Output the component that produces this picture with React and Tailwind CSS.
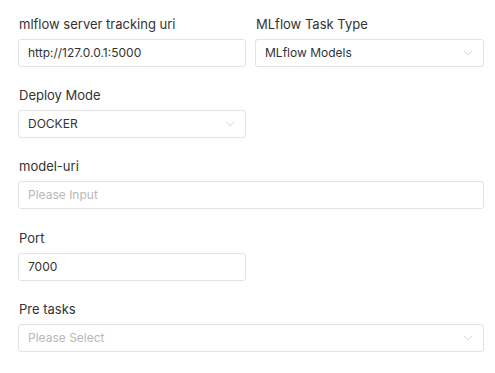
import { ChevronDown } from "lucide-react";

function Field({ label, children }) {
  return (
    <div className="flex flex-col">
      <label className="text-[13px] leading-[18px] text-[#333] mb-[6px] pl-[1px]">{label}</label>
      {children}
    </div>
  );
}

function TextBox({ value, placeholder }) {
  return (
    <div className="h-[28px] border border-[#e3e3e3] rounded-[3px] bg-white flex items-center px-[9px] text-[12px]">
      {value ? (
        <span className="text-[#333]">{value}</span>
      ) : (
        <span className="text-[#b8b8b8]">{placeholder}</span>
      )}
    </div>
  );
}

function SelectBox({ value, placeholder }) {
  return (
    <div className="h-[28px] border border-[#e3e3e3] rounded-[3px] bg-white flex items-center justify-between pl-[9px] pr-[8px] text-[12px]">
      {value ? (
        <span className="text-[#333]">{value}</span>
      ) : (
        <span className="text-[#b8b8b8]">{placeholder}</span>
      )}
      <ChevronDown size={14} strokeWidth={1.3} className="text-[#c4c4c4]" />
    </div>
  );
}

function App() {
  return (
    <div
      className="w-[495px] h-[373px] bg-white pl-[18px] pr-[11px] pt-[15px]"
      style={{ fontFamily: "Inter, 'Noto Sans', sans-serif" }}
    >
      <div className="grid grid-cols-[228px_229px] gap-x-[9px]">
        <Field label="mlflow server tracking uri">
          <TextBox value="http://127.0.0.1:5000" />
        </Field>
        <Field label="MLflow Task Type">
          <SelectBox value="MLflow Models" />
        </Field>
      </div>
      <div className="mt-[19px] w-[228px]">
        <Field label="Deploy Mode">
          <SelectBox value="DOCKER" />
        </Field>
      </div>
      <div className="mt-[19px] w-[466px]">
        <Field label="model-uri">
          <TextBox placeholder="Please Input" />
        </Field>
      </div>
      <div className="mt-[20px] w-[228px]">
        <Field label="Port">
          <TextBox value="7000" />
        </Field>
      </div>
      <div className="mt-[19px] w-[466px]">
        <Field label="Pre tasks">
          <SelectBox placeholder="Please Select" />
        </Field>
      </div>
    </div>
  );
}

export default App;
